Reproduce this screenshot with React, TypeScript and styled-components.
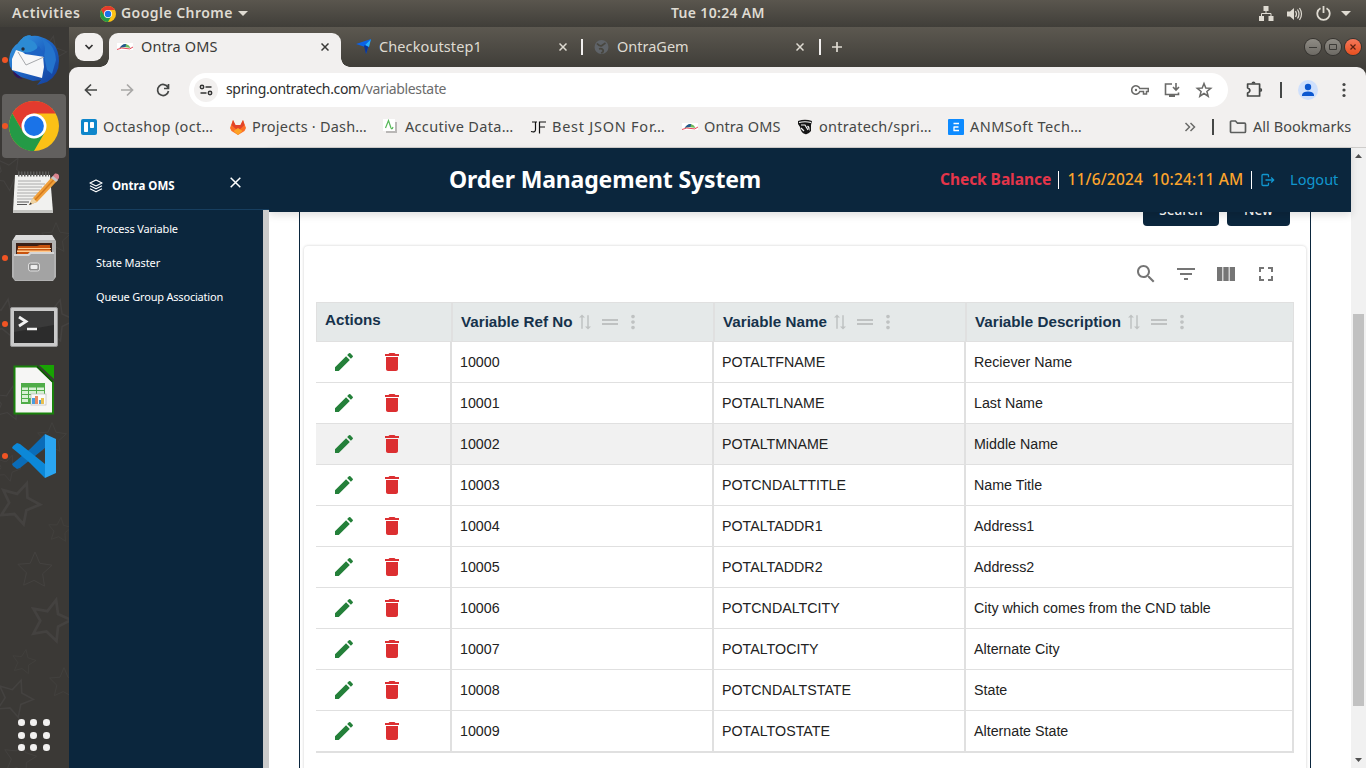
import React from 'react';
import styled, { createGlobalStyle } from 'styled-components';

const NAVY = '#0b263d';
const UI = `'Noto Sans', 'Open Sans', sans-serif`;

const Global = createGlobalStyle`
  * { box-sizing: border-box; }
  html, body { margin: 0; padding: 0; overflow: hidden; }
  body { font-family: ${UI}; }
  svg { display: block; flex: none; }
`;

const Desktop = styled.div`
  width: 1366px;
  height: 768px;
  display: flex;
  flex-direction: column;
  overflow: hidden;
  background: #3b3936;
`;

/* Text run with its own metrics */
const Label = styled.span<{ $size?: number; $ls?: number; $w?: number; $weight?: number; $color?: string }>`
  display: block;
  flex: none;
  white-space: pre;
  padding-bottom: 2px;
  font-size: ${p => p.$size ?? 14.5}px;
  letter-spacing: ${p => p.$ls ?? 0}px;
  font-weight: ${p => p.$weight ?? 400};
  ${p => (p.$w ? `width: ${p.$w}px;` : '')}
  ${p => (p.$color ? `color: ${p.$color};` : '')}
`;

/* ---------- desktop panel ---------- */
const Panel = styled.header`
  height: 27px;
  flex: none;
  display: flex;
  align-items: center;
  color: #dfdbd2;
  background: linear-gradient(#5a564e, #403e39);
`;
const PanelLeft = styled.div`
  display: flex;
  align-items: center;
  width: 671px;
  padding-left: 12px;
`;
const PanelRight = styled.div`
  display: flex;
  flex: 1;
  align-items: center;
  justify-content: flex-end;
  padding-right: 15px;
`;
const ChromeSlot = styled.div`
  margin: 0 5px 0 0;
`;
const Caret = styled.i<{ $ml: number }>`
  margin-left: ${p => p.$ml}px;
  border: 5px solid transparent;
  border-top-color: #dfdbd2;
  border-bottom: 0;
`;

const Workspace = styled.div`
  flex: 1;
  min-height: 0;
  display: flex;
`;

/* ---------- dock ---------- */
const Dock = styled.nav`
  width: 69px;
  flex: none;
  display: flex;
  flex-direction: column;
  position: relative;
  background: #3b3936;
`;
const Stars = styled.svg`
  position: absolute;
  inset: 0;
`;
const DockItem = styled.div<{ $active?: boolean; $pad?: string }>`
  position: relative;
  height: 64px;
  width: 64px;
  margin: 1px 0 1px 2px;
  padding: ${p => p.$pad ?? '0'};
  border-radius: 4px;
  display: flex;
  align-items: center;
  justify-content: center;
  background: ${p => (p.$active ? '#62605e' : 'transparent')};
`;
const Running = styled.span`
  position: absolute;
  left: 0;
  top: 29px;
  width: 6px;
  height: 6px;
  border-radius: 50%;
  background: #f05424;
`;
const AppsGrid = styled.div`
  position: relative;
  margin: auto 0 17px 18px;
  display: grid;
  grid-template-columns: repeat(3, 6.6px);
  gap: 5.9px;
`;
const AppsDot = styled.i`
  height: 6.6px;
  border-radius: 50%;
  background: #f2f1f0;
`;

/* ---------- browser ---------- */
const Browser = styled.section`
  flex: 1;
  min-width: 0;
  display: flex;
  flex-direction: column;
  background: #403e39;
`;
const TabStrip = styled.div`
  height: 40px;
  flex: none;
  display: flex;
  align-items: center;
  padding-left: 6px;
  color: #dfdbd2;
  background: linear-gradient(#5c5850, #403e39);
`;
const TabSearch = styled.div`
  width: 28px;
  height: 28px;
  border-radius: 9px;
  background: #f2f0ef;
  display: flex;
  align-items: center;
  justify-content: center;
`;
const ActiveTab = styled.div`
  position: relative;
  width: 232px;
  height: 34px;
  margin: 6px 0 0 6px;
  padding: 0 12px 6px 8px;
  display: flex;
  align-items: center;
  gap: 8px;
  border-radius: 9px 9px 0 0;
  background: #f2f0ef;
  color: #3a3a38;
  &::before, &::after {
    content: '';
    position: absolute;
    bottom: 0;
    width: 9px;
    height: 9px;
  }
  &::before { left: -9px; background: radial-gradient(circle at 0 0, transparent 8.5px, #f2f0ef 9px); }
  &::after { right: -9px; background: radial-gradient(circle at 100% 0, transparent 8.5px, #f2f0ef 9px); }
`;
const Tab = styled.div<{ $w: number; $pl: number }>`
  width: ${p => p.$w}px;
  padding: 0 15px 0 ${p => p.$pl}px;
  display: flex;
  align-items: center;
  gap: 7px;
`;
const Push = styled.span`
  flex: 1;
`;
const Separator = styled.span<{ $color: string; $h?: number; $w?: number; $m?: string }>`
  flex: none;
  width: ${p => p.$w ?? 2}px;
  height: ${p => p.$h ?? 16}px;
  margin: ${p => p.$m ?? '0'};
  background: ${p => p.$color};
`;
const WindowButtons = styled.div`
  display: flex;
  gap: 4px;
  margin: 0 5px 0 auto;
`;
const WindowButton = styled.span<{ $close?: boolean }>`
  width: 16px;
  height: 16px;
  border-radius: 50%;
  display: flex;
  align-items: center;
  justify-content: center;
  background: ${p => (p.$close ? 'linear-gradient(#f4775a, #e9501f)' : 'linear-gradient(#8f8c85, #6d6a64)')};
  box-shadow: 0 0 0 1px #35332f;
`;
const Toolbar = styled.div`
  height: 45px;
  flex: none;
  display: flex;
  align-items: center;
  padding: 0 13px 0 13px;
  border-radius: 9px 9px 0 0;
  background: #f2f0ef;
  color: #454746;
`;
const NavIcons = styled.div`
  display: flex;
  gap: 18px;
  width: 107px;
`;
const Omnibox = styled.div`
  width: 1039px;
  height: 34px;
  border-radius: 17px;
  padding: 0 15px 0 5px;
  display: flex;
  align-items: center;
  background: #fff;
  color: #2e2e2e;
`;
const SiteInfo = styled.span`
  width: 24px;
  height: 24px;
  margin-right: 8px;
  border-radius: 50%;
  background: #f2f0ef;
  display: flex;
  align-items: center;
  justify-content: center;
`;
const UrlPath = styled.span`
  color: #6c6c6c;
`;
const OmniIcons = styled.div`
  display: flex;
  gap: 14px;
  margin-left: auto;
  color: #6a6a68;
`;
const ToolIcons = styled.div`
  display: flex;
  align-items: center;
  flex: 1;
  padding-left: 16px;
`;
const Avatar = styled.span`
  width: 20px;
  height: 20px;
  border-radius: 50%;
  background: #cfe0fc;
  display: flex;
  align-items: center;
  justify-content: center;
`;
const Bookmarks = styled.div`
  height: 36px;
  flex: none;
  display: flex;
  align-items: center;
  padding: 0 14px 6px 12px;
  background: #f2f0ef;
  border-bottom: 1px solid #cfcdcb;
  color: #454746;
`;
const Bookmark = styled.div<{ $w: number }>`
  width: ${p => p.$w}px;
  display: flex;
  align-items: center;
  gap: 6px;
`;

/* ---------- page ---------- */
const Viewport = styled.div`
  flex: 1;
  min-height: 0;
  display: flex;
  background: #fff;
`;
const Sidebar = styled.aside`
  width: 200px;
  flex: none;
  display: flex;
  flex-direction: column;
  background: ${NAVY};
  color: #fff;
  position: relative;
  z-index: 2;
`;
const SideHead = styled.div`
  height: 62px;
  display: flex;
  align-items: center;
  gap: 9px;
  padding: 15px 28px 0 20px;
  border-bottom: 1px solid #173e5f;
`;
const SideClose = styled.span`
  margin: -8px 0 0 auto;
`;
const SideMenu = styled.div`
  flex: 1;
  border-right: 6px solid #cbcbcb;
  padding: 2px 0 0 27px;
`;
const SideLink = styled.div`
  height: 34px;
  display: flex;
  align-items: center;
`;
const Main = styled.main`
  width: 1082px;
  display: flex;
  flex-direction: column;
`;
const PageHeader = styled.div`
  position: relative;
  z-index: 1;
  height: 64px;
  flex: none;
  display: flex;
  align-items: center;
  padding-left: 180px;
  background: ${NAVY};
  box-shadow: 0 3px 8px rgba(0, 0, 0, 0.13);
`;
const Title = styled.h1`
  margin: 0;
  padding-bottom: 2px;
  width: 491px;
  color: #fff;
  font: 700 23px ${UI};
  letter-spacing: -0.15px;
  white-space: nowrap;
`;
const Scroller = styled.div`
  flex: 1;
  min-height: 0;
  overflow: hidden;
`;
const Frame = styled.div`
  margin: 0 40px 0 30px;
  height: 800px;
  padding: 0 4px;
  border: solid ${NAVY};
  border-width: 0 1px;
  display: flow-root;
`;
const Buttons = styled.div`
  display: flex;
  justify-content: flex-end;
  gap: 8px;
  margin: -22px 16px 20px 0;
`;
const NavyButton = styled.button<{ $w: number }>`
  width: ${p => p.$w}px;
  height: 36px;
  padding: 3px 0 0;
  border: 0;
  border-radius: 4px;
  background: ${NAVY};
  color: #fff;
  font: 500 13.5px ${UI};
`;
const Paper = styled.div`
  height: 700px;
  border-radius: 4px;
  background: #fff;
  padding: 0 12px;
  box-shadow: 0 0 3px rgba(0, 0, 0, 0.2);
`;
const TableTools = styled.div`
  height: 56px;
  display: flex;
  align-items: center;
  justify-content: flex-end;
  gap: 16px;
  padding-right: 16px;
  color: #757575;
`;
const Table = styled.div`
  width: 978px;
  border-bottom: 1px solid #e0e0e0;
  font-family: 'Liberation Sans', Arial, sans-serif;
`;
const HeadRow = styled.div`
  display: grid;
  grid-template-columns: 136px 262px 252px 326px;
  height: 40px;
  border: 1px solid #e0e0e0;
  background: #e5e9e9;
  color: #16324b;
  font-size: 15.2px;
  font-weight: 700;
`;
const HeadCell = styled.div<{ $first?: boolean }>`
  display: flex;
  align-items: center;
  padding: 0 0 ${p => (p.$first ? 6 : 2)}px 8px;
  border-right: 2px solid #e0e0e0;
  &:last-child { border-right: 0; }
`;
const HeadIcons = styled.span`
  display: flex;
  align-items: center;
  margin: 1px 0 0 4px;
  color: #bfc2c2;
`;
const SortSlot = styled.span`
  margin-right: 4px;
`;
const Row = styled.div<{ $hover?: boolean }>`
  display: grid;
  grid-template-columns: 136px 262px 252px 328px;
  height: 41px;
  border-bottom: 1px solid #e0e0e0;
  background: ${p => (p.$hover ? '#f1f1f1' : '#fff')};
  color: #222;
  font-size: 14.25px;
`;
const Cell = styled.div`
  display: flex;
  align-items: center;
  padding-left: 8px;
  border-right: 2px solid #e0e0e0;
  white-space: nowrap;
`;
const ActionCell = styled(Cell)`
  gap: 24px;
  padding-left: 16px;
`;
const Action = styled.span<{ $color: string }>`
  color: ${p => p.$color};
`;

/* ---------- scrollbar ---------- */
const ScrollTrack = styled.div`
  width: 15px;
  display: flex;
  flex-direction: column;
  align-items: center;
  justify-content: space-between;
  padding: 6px 0 6px;
  background: #f1f1f1;
`;
const ScrollThumb = styled.div`
  width: 11px;
  height: 392px;
  margin: 156px 0 auto;
  background: #c1c1c1;
`;

/* ---------- icons ---------- */
const ChromeLogo = ({ size }: { size: number }) => (
  <svg width={size} height={size} viewBox="0 0 50 50">
    <circle cx="25" cy="25" r="25" fill="#fbc116" />
    <path d="M25 12.5H46.65A25 25 0 0 0 3.35 12.5L14.2 31.25L20 14Z" fill="#e33b2e" />
    <path d="M3.35 12.5A25 25 0 0 0 25 50L35.8 31.25L25 36L14.2 31.25Z" fill="#249a46" />
    <circle cx="25" cy="25" r="12.5" fill="#fff" />
    <circle cx="25" cy="25" r="9.9" fill="#1a73e8" />
  </svg>
);
const OntraLogo = () => (
  <svg width="16" height="16" viewBox="0 0 16 16">
    <rect y="4" width="16" height="7" fill="#fff" />
    <path d="M3 9Q6 4.500 9 5Q12.500 6 13.500 9Q8 7.500 3 9Z" fill="#6cb85a" />
    <path d="M2.500 9Q5.500 4.500 9 5L8.500 8Q5 7.800 2.500 9Z" fill="#23598f" />
    <path d="M0 10.500Q5 8 9 9.500T16 8" fill="none" stroke="#e8485a" strokeWidth="1" />
  </svg>
);
const Cross = ({ size = 8, w = 1.5 }: { size?: number; w?: number }) => (
  <svg width={size} height={size} viewBox="0 0 8 8">
    <path d="M.5 .5L7.500 7.500M7.500 .5L.5 7.500" stroke="currentColor" strokeWidth={w} />
  </svg>
);
const MuiIcon = ({ d, size = 24, rotate = 0 }: { d: string; size?: number; rotate?: number }) => (
  <svg width={size} height={size} viewBox="0 0 24 24" fill="currentColor">
    <path d={d} transform={rotate ? `rotate(${rotate} 12 12)` : undefined} />
  </svg>
);
const EDIT = 'M3 17.25V21h3.750L17.810 9.940l-3.750-3.750L3 17.250zM20.710 7.040c.39-.39.39-1.020 0-1.410l-2.340-2.340a.9959.9959 0 0 0-1.410 0l-1.830 1.830 3.750 3.750 1.830-1.830z';
const DELETE = 'M6 19c0 1.100.9 2 2 2h8c1.100 0 2-.9 2-2V7H6v12zM19 4h-3.500l-1-1h-5l-1 1H5v2h14V4z';
const SEARCH = 'M15.500 14h-.79l-.28-.27C15.410 12.590 16 11.110 16 9.500 16 5.910 13.090 3 9.500 3S3 5.910 3 9.500 5.910 16 9.500 16c1.610 0 3.090-.59 4.230-1.570l.27.28v.79l5 4.990L20.490 19l-4.990-5zm-6 0C7.010 14 5 11.990 5 9.500S7.010 5 9.500 5 14 7.010 14 9.500 11.990 14 9.500 14z';
const FILTER = 'M10 18h4v-2h-4v2zM3 6v2h18V6H3zm3 7h12v-2H6v2z';
const COLUMNS = 'M14.670 5v14H9.330V5h5.340zm1 14H21V5h-5.330v14zm-7.340 0V5H3v14h5.330z';
const FULL = 'M7 14H5v5h5v-2H7v-3zm-2-4h2V7h3V5H5v5zm12 7h-3v2h5v-5h-2v3zM14 5v2h3v3h2V5h-5z';
const SYNC = 'M22 8l-4-4v3H3v2h15v3l4-4zM2 16l4 4v-3h15v-2H6v-3l-4 4z';
const DRAG = 'M20 9H4v2h16V9zM4 15h16v-2H4v2z';
const MORE = 'M12 8c1.100 0 2-.9 2-2s-.9-2-2-2-2 .9-2 2 .9 2 2 2zm0 2c-1.100 0-2 .9-2 2s.9 2 2 2 2-.9 2-2-.9-2-2-2zm0 6c-1.100 0-2 .9-2 2s.9 2 2 2 2-.9 2-2-.9-2-2-2z';

const Thunderbird = () => (
  <svg width="50" height="52" viewBox="0 0 50 52">
    <defs>
      <linearGradient id="tb" x1="0" y1="0" x2="1" y2="1">
        <stop offset="0" stopColor="#3aa0e4" /><stop offset=".5" stopColor="#1d63c4" /><stop offset="1" stopColor="#123a96" />
      </linearGradient>
    </defs>
    <path d="M11 8Q15 0 22 2Q28 1 32 3Q50 8 50 27Q50 41 38 48L28 51L32 46L24 47L12 43Q0 38 0 26Q1 13 11 8Z" fill="url(#tb)" />
    <path d="M9 9Q15 1 22 1L19 5Q30 8 28 18L14 20L7 26Q6 16 9 9Z" fill="#2c8bd4" />
    <path d="M32 4Q46 10 47 26L43 40L38 36L35 22Q38 12 32 4Z" fill="#2474cc" />
    <path d="M4 37L14 45L9 44Q4 41 4 37Z" fill="#30155c" />
    <path d="M7 16L16 19L34 22L35 33L33 44L3 36L3 25Z" fill="#f7f7f8" />
    <path d="M9 18L17 31L35 23" fill="none" stroke="#a6a8ac" strokeWidth="1" />
    <path d="M14 18Q24 20 30 12L36 23L16 20Z" fill="#1d63c4" />
    <circle cx="14" cy="15" r="1.700" fill="#222b3a" />
  </svg>
);
const TextEditor = () => (
  <svg width="48" height="44" viewBox="0 0 48 44">
    <path d="M4 5H39L42 42H2Z" fill="#f1f1ef" />
    <path d="M2 40H42V43H2Z" fill="#c3c3c0" />
    <path d="M7 4H38" stroke="#5c5c5a" strokeWidth="5" strokeDasharray="1.500 1.500" />
    <path d="M7 11H30M7 14H34M6.500 17H31M6.500 20H29M6 23H30M6 26H24M6 29H23" stroke="#aaa" strokeWidth="1" />
    <path d="M6 32H18M6 34.500H16" stroke="#555" strokeWidth="1.200" />
    <path d="M22 28L41 7L46 11L26 32L18 35Z" fill="#f0a03c" />
    <path d="M24 30L43.500 9" stroke="#d37a1d" strokeWidth="1.500" />
    <path d="M22 28L26 32L18 35Z" fill="#edd3a4" /><path d="M18 35L19.500 32.500L21 34Z" fill="#333" />
    <path d="M41 7L44 3.500Q49 3 48 8L46 11Z" fill="#d9838d" /><path d="M40 8L42 6L47 10L45 12Z" fill="#c7c7c7" />
  </svg>
);
const Files = () => (
  <svg width="44" height="48" viewBox="0 0 44 48">
    <path d="M4 1H40L44 7V43L41 47H3L0 43V7Z" fill="#b2b2b2" />
    <path d="M4 1H40L43 6H1Z" fill="#dcdcdc" />
    <path d="M4 9H40V21H4Z" fill="#3c2017" />
    <path d="M6 12H25L28 11H38V20H5Z" fill="#c9540f" /><path d="M6 14H39V15H6ZM5 16.500H39V18H5Z" fill="#ffc98c" />
    <path d="M2 20H16L18 18H42V46H2Z" fill="#a3a3a3" /><path d="M2 20H16L18 18H42V20H19L17 22H2Z" fill="#d6d6d6" />
    <rect x="16.500" y="29" width="11" height="8" rx="2" fill="#8e8e8e" stroke="#dedede" />
    <rect x="18.500" y="31" width="7" height="4" rx="1" fill="#eee" />
  </svg>
);
const Terminal = () => (
  <svg width="48" height="40" viewBox="0 0 48 40">
    <rect x=".5" y=".5" width="47" height="39" rx="1.500" fill="#cacaca" stroke="#969696" />
    <rect x="4" y="4" width="40" height="32" fill="#2c2c2c" /><path d="M4 4H44V18L4 25Z" fill="#3a3a3a" />
    <path d="M9 10L16 14.500L9 19" fill="none" stroke="#f2f2f2" strokeWidth="2.800" /><path d="M17 22H27" stroke="#f2f2f2" strokeWidth="2.500" />
  </svg>
);
const Calc = () => (
  <svg width="42" height="50" viewBox="0 0 42 50">
    <path d="M1.500 1.500H24L40 17V48.500H1.500Z" fill="#f6f6f5" stroke="#19810b" strokeWidth="2" />
    <path d="M26 0H41V14Z" fill="#18a303" /><path d="M24 1.500L40 17" stroke="#0e5405" strokeWidth="1.500" />
    <rect x="8" y="18" width="24" height="21" fill="#4fac48" />
    <path d="M9 22.500H15V25H9ZM16 22.500H23V25H16ZM24 22.500H31V25H24ZM9 26H15V29H9ZM16 26H23V29H16ZM24 26H31V29H24ZM9 30H15V33H9ZM16 30H23V33H16ZM9 34H15V37H9Z" fill="#d8f0d5" />
    <rect x="18" y="29" width="15" height="11" fill="#fafafa" stroke="#bbb" strokeWidth=".7" />
    <path d="M19 33H22V39H19ZM26 35H28V39H26Z" fill="#4a9de0" /><path d="M22 31H25V39H22Z" fill="#e98a60" /><path d="M28 33H31V39H28Z" fill="#e8c04f" />
  </svg>
);
const VsCode = () => (
  <svg width="44" height="44" viewBox="0 0 44 44">
    <path d="M33 0L18 15L5 26L0 30L1 32L5 35L8 34L33 14Z" fill="#0a6cb8" />
    <path d="M33 44L18 29L5 18L0 14L1 12L5 9L8 10L33 30Z" fill="#0c88d8" />
    <path d="M33 0L44 5V39L33 44Z" fill="#2aa5f1" />
  </svg>
);
const Layers = () => (
  <svg width="14" height="14" viewBox="0 0 14 14" fill="none" stroke="#fff" strokeWidth="1.200" strokeLinejoin="round">
    <path d="M7 1L13 4L7 7L1 4ZM1 6.800L7 9.800L13 6.800M1 9.700L7 12.800L13 9.700" />
  </svg>
);
const Exit = () => (
  <svg width="14" height="14" viewBox="0 0 14 14" fill="none" stroke="#1196cf" strokeWidth="1.300" strokeLinejoin="round">
    <path d="M7.500 4.300V2.500Q7.500 1.500 6.500 1.500H2Q1 1.500 1 2.500V11.500Q1 12.500 2 12.500H6.500Q7.500 12.500 7.500 11.500V9.700M4.500 7H12.700M10.200 4.500L12.700 7L10.200 9.500" />
  </svg>
);

const star = 'M0 -18L5 -6L18 -4L8 5L10 18L-1 12L-12 17L-9 4L-18 -5L-5 -6Z';
const starSpots: [number, number, number, number, number][] = [
  [20, 475, 1.1, 20, 2.5], [60, 502, 0.65, 5, 1], [35, 542, 0.95, 0, 1], [51, 592, 1.1, 15, 2.5],
  [24, 634, 0.65, 10, 1], [64, 655, 0.8, 0, 1], [15, 670, 1, 20, 1.6], [20, 730, 0.9, 10, 1],
  [50, 25, 0.9, 12, 1.2], [10, 145, 0.9, 30, 1.2], [56, 210, 0.8, 0, 1], [5, 290, 1, 10, 1.5],
  [55, 292, 1.1, 15, 1.4], [10, 375, 0.9, 10, 1.2], [52, 410, 0.8, 0, 1], [8, 440, 0.7, 20, 1],
];

const headers = ['Variable Ref No', 'Variable Name', 'Variable Description'];
const rows: [string, string, string][] = [
  ['10000', 'POTALTFNAME', 'Reciever Name'],
  ['10001', 'POTALTLNAME', 'Last Name'],
  ['10002', 'POTALTMNAME', 'Middle Name'],
  ['10003', 'POTCNDALTTITLE', 'Name Title'],
  ['10004', 'POTALTADDR1', 'Address1'],
  ['10005', 'POTALTADDR2', 'Address2'],
  ['10006', 'POTCNDALTCITY', 'City which comes from the CND table'],
  ['10007', 'POTALTOCITY', 'Alternate City'],
  ['10008', 'POTCNDALTSTATE', 'State'],
  ['10009', 'POTALTOSTATE', 'Alternate State'],
];

const dock: { icon: React.ReactNode; running?: boolean; active?: boolean; pad?: string }[] = [
  { icon: <Thunderbird />, running: true },
  { icon: <ChromeLogo size={50} />, running: true, active: true },
  { icon: <TextEditor />, pad: '0 0 0 2px' },
  { icon: <Files />, running: true },
  { icon: <Terminal />, running: true, pad: '5px 0 0' },
  { icon: <Calc /> },
  { icon: <VsCode />, running: true },
];

const bookmarks: { w: number; text: string; ls: number; icon: React.ReactNode }[] = [
  { w: 149, text: 'Octashop (oct…', ls: 0.32, icon: (
    <svg width="16" height="16" viewBox="0 0 16 16"><rect width="16" height="16" rx="2" fill="#0e86cb" /><rect x="3" y="3" width="4" height="10" rx=".7" fill="#fff" /><rect x="9" y="3" width="4" height="6" rx=".7" fill="#fff" /></svg>) },
  { w: 153, text: 'Projects · Dash…', ls: 0.2, icon: (
    <svg width="16" height="16" viewBox="0 0 16 16"><path d="M3 1L5.500 6H10.500L13 1L16 9L14.500 12L8 16L1.500 12L0 9Z" fill="#fc6d26" /><path d="M3 1L5.500 6H10.500L13 1L14.500 6L8 12L1.500 6Z" fill="#e24329" /><path d="M8 16L3.500 12L8 9L12.500 12Z" fill="#fca326" /></svg>) },
  { w: 147, text: 'Accutive Data…', ls: 0.32, icon: (
    <svg width="16" height="16" viewBox="0 0 16 16"><path d="M3 3H14V14H3Z" fill="#b9b7b6" /><path d="M0 0H12V12H0Z" fill="#fff" /><path d="M2.500 9L5.500 1.500L8 9Q9 11 10 8" fill="none" stroke="#56b858" strokeWidth="1.200" /></svg>) },
  { w: 152, text: 'Best JSON For…', ls: 0.75, icon: (
    <svg width="16" height="16" viewBox="0 0 16 16"><path d="M2 3H7M5.500 3V10.500Q5.500 14 1 12.500M9.500 14.500V3H16M9.500 8H15" fill="none" stroke="#111" strokeWidth="1.200" /></svg>) },
  { w: 115, text: 'Ontra OMS', ls: 0.1, icon: <OntraLogo /> },
  { w: 151, text: 'ontratech/spri…', ls: 0.27, icon: (
    <svg width="16" height="16" viewBox="0 0 16 16"><path d="M1 2Q8 -.5 15 2L14 6L14 12Q11 16 8 15Q4 14 3 8L1 5Z" fill="#161616" /><path d="M2 3.500Q8 2 14 3.500M4 6L8 6L11 11M4 9L7 12" fill="none" stroke="#f4f4f4" strokeWidth="1.200" /><path d="M10 7Q13 6 12.500 12L11 9Z" fill="#eee" /></svg>) },
  { w: 170, text: 'ANMSoft Tech…', ls: 0.42, icon: (
    <svg width="16" height="16" viewBox="0 0 16 16"><rect width="16" height="16" rx="1" fill="#0e8bff" /><path d="M5.500 4.500H11M5.500 8H10.500M5.500 11.500H11M6 8V12" stroke="#fff" strokeWidth="1.300" /></svg>) },
];

export default function App() {
  return (
    <Desktop>
      <Global />
      <Panel>
        <PanelLeft>
          <Label $size={14} $ls={0.6} $weight={600} $w={88}>Activities</Label>
          <ChromeSlot><ChromeLogo size={16} /></ChromeSlot>
          <Label $size={14} $ls={0.45} $weight={600} $w={111}>Google Chrome</Label>
          <Caret $ml={6} />
        </PanelLeft>
        <Label $size={14} $ls={0.32} $weight={600}>Tue 10:24 AM</Label>
        <PanelRight>
          <svg width="16" height="16" viewBox="0 0 16 16" fill="#dfdbd2"><path d="M5.500 0H10.500V5H5.500ZM1 10H6V15H1ZM10.500 10H15.500V15H10.500Z" /><path d="M8 5V7.500M3.500 10V7.500H13V10" fill="none" stroke="#dfdbd2" /></svg>
          <svg width="42" height="16" viewBox="0 0 42 16"><path d="M13 5.500H16L20 2V14L16 10.500H13Z" fill="#dfdbd2" /><path d="M21.500 5Q23.500 8 21.500 11M23.500 3.500Q26.500 8 23.500 12.500M25.500 2Q29.500 8 25.500 14" fill="none" stroke="#dfdbd2" strokeWidth="1.200" /></svg>
          <svg width="16" height="16" viewBox="0 0 16 16" fill="none" stroke="#dfdbd2" strokeWidth="1.800"><path d="M4.500 2.200A6.200 6.200 0 1 0 10.500 2.200M7.500 0V7" /></svg>
          <Caret $ml={9} />
        </PanelRight>
      </Panel>
      <Workspace>
        <Dock>
          <Stars width="69" height="741" viewBox="0 0 69 741">
            {starSpots.map(([x, y, s, r, w], i) => (
              <path key={i} d={star} fill="none" stroke="#444240" strokeWidth={w} transform={`translate(${x} ${y}) rotate(${r}) scale(${s})`} />
            ))}
          </Stars>
          {dock.map((d, i) => (
            <DockItem key={i} $active={d.active} $pad={d.pad}>
              {d.running && <Running />}
              {d.icon}
            </DockItem>
          ))}
          <AppsGrid>{Array.from({ length: 9 }, (_, i) => <AppsDot key={i} />)}</AppsGrid>
        </Dock>
        <Browser>
          <TabStrip>
            <TabSearch>
              <svg width="10" height="10" viewBox="0 0 10 10"><path d="M1.500 3L5 6.500L8.500 3" fill="none" stroke="#333" strokeWidth="1.700" /></svg>
            </TabSearch>
            <ActiveTab>
              <OntraLogo />
              <Label $ls={0.1}>Ontra OMS</Label>
              <Push />
              <Cross />
            </ActiveTab>
            <Tab $w={241} $pl={15}>
              <svg width="16" height="16" viewBox="0 0 16 16"><path d="M0 5L15 0L10 15L9 8Z" fill="#0b63e8" /><path d="M8 7L15 0L10 15Z" fill="#08349a" /><path d="M9 6L15 0L13 8Z" fill="#27b0ff" /></svg>
              <Label $ls={0.1}>Checkoutstep1</Label>
              <Push />
              <Cross />
            </Tab>
            <Separator $color="#f2f0ef" $m="0 0 0 -1px" />
            <Tab $w={236} $pl={11}>
              <svg width="16" height="16" viewBox="0 0 16 16"><circle cx="7.500" cy="8" r="7" fill="#5f6368" /><path d="M3 4.500Q6 8 8 6.500T11.500 4M5 10Q8 9 9 11T7 14" fill="none" stroke="#48463f" strokeWidth="1.800" /></svg>
              <Label>OntraGem</Label>
              <Push />
              <Cross />
            </Tab>
            <Separator $color="#f2f0ef" $m="0 10px 0 0" />
            <svg width="12" height="12" viewBox="0 0 12 12"><path d="M6 1V11M1 6H11" stroke="#dfdbd2" strokeWidth="1.700" /></svg>
            <WindowButtons>
              <WindowButton><svg width="8" height="8" viewBox="0 0 8 8"><path d="M0 4.500H8" stroke="#3c3b37" /></svg></WindowButton>
              <WindowButton><svg width="8" height="8" viewBox="0 0 8 8"><path d="M.5 1.500H7.500V6.500H.5Z" fill="none" stroke="#3c3b37" /></svg></WindowButton>
              <WindowButton $close><svg width="6" height="6" viewBox="0 0 6 6"><path d="M.5 .5L5.500 5.500M5.500 .5L.5 5.500" stroke="#5a2011" strokeWidth="1.200" /></svg></WindowButton>
            </WindowButtons>
          </TabStrip>
          <Toolbar>
            <NavIcons>
              <svg width="18" height="18" viewBox="0 0 18 18" fill="none" stroke="#454746" strokeWidth="1.700"><path d="M15 9H4M9 3.500L3.500 9L9 14.500" /></svg>
              <svg width="18" height="18" viewBox="0 0 18 18" fill="none" stroke="#a9a8a7" strokeWidth="1.700"><path d="M3 9H14M9 3.500L14.500 9L9 14.500" /></svg>
              <svg width="18" height="18" viewBox="0 0 18 18" fill="none" stroke="#454746" strokeWidth="1.700"><path d="M14 6.500A5.500 5.500 0 1 0 14.500 10M14.500 3V7.500H10" /></svg>
            </NavIcons>
            <Omnibox>
              <SiteInfo>
                <svg width="14" height="12" viewBox="0 0 14 12" fill="none" stroke="#333" strokeWidth="1.500"><circle cx="3" cy="3" r="1.700" /><path d="M6.500 3H12.500M1.500 9H7.500" /><circle cx="11" cy="9" r="1.700" /></svg>
              </SiteInfo>
              <Label $size={14} $ls={-0.34}>spring.ontratech.com<UrlPath>/variablestate</UrlPath></Label>
              <OmniIcons>
                <svg width="18" height="18" viewBox="0 0 18 18" fill="none" stroke="currentColor" strokeWidth="1.500"><path d="M8.800 7.500H17.300V10.500H15.500V13H12.500V10.500H8.800A4.200 4.200 0 1 1 8.800 7.500Z" /><circle cx="5" cy="9" r="1.200" fill="currentColor" stroke="none" /></svg>
                <svg width="18" height="18" viewBox="0 0 18 18" fill="none" stroke="currentColor" strokeWidth="1.600"><path d="M9 3H2.500V13.500H15.500V11.500M13 2V8M10 6L13 9L16 6" /><path d="M6 15H12" strokeWidth="2" /></svg>
                <svg width="18" height="18" viewBox="0 0 18 18" fill="none" stroke="currentColor" strokeWidth="1.500"><path d="M9 2.500L10.800 7L15.700 7.300L11.900 10.400L13.200 15.200L9 12.500L4.800 15.200L6.100 10.400L2.300 7.300L7.200 7Z" /></svg>
              </OmniIcons>
            </Omnibox>
            <ToolIcons>
              <svg width="20" height="20" viewBox="0 0 20 20"><path d="M3.600 4H15.600V16H3.600V13Q6.200 12 5.800 10Q5.400 8.200 3.600 8Z" fill="none" stroke="#454746" strokeWidth="1.700" strokeLinejoin="round" /><path d="M7.500 3.400A2 2 0 0 1 11.500 3.400ZM16.200 8A2 2 0 0 1 16.200 12Z" fill="#454746" /></svg>
              <Separator $color="#454746" $m="0 16px 0 16px" />
              <Avatar><svg width="14" height="14" viewBox="0 0 14 14" fill="#0b57d0"><circle cx="7" cy="4" r="3.200" /><path d="M1 13V11.500Q2 8.500 7 8.500T13 11.500V13Z" /></svg></Avatar>
              <Push />
              <svg width="18" height="16" viewBox="0 0 18 16" fill="#454746"><circle cx="9" cy="2.500" r="1.600" /><circle cx="9" cy="8" r="1.600" /><circle cx="9" cy="13.500" r="1.600" /></svg>
            </ToolIcons>
          </Toolbar>
          <Bookmarks>
            {bookmarks.map(b => (
              <Bookmark key={b.text} $w={b.w}>{b.icon}<Label $ls={b.ls}>{b.text}</Label></Bookmark>
            ))}
            <Push />
            <svg width="12" height="12" viewBox="0 0 12 12" fill="none" stroke="#6a6a68" strokeWidth="1.500"><path d="M1.500 2L5.500 6L1.500 10M6.500 2L10.500 6L6.500 10" /></svg>
            <Separator $color="#454746" $m="0 15px 0 16px" />
            <Bookmark $w={123}>
              <svg width="18" height="16" viewBox="0 0 18 16"><path d="M1.500 3Q1.500 2 2.500 2H6.500L8.500 4.200H15.500Q16.500 4.200 16.500 5.200V12.500Q16.500 13.500 15.500 13.500H2.500Q1.500 13.500 1.500 12.500Z" fill="none" stroke="#5c5e5d" strokeWidth="1.700" /></svg>
              <Label $ls={0.05}>All Bookmarks</Label>
            </Bookmark>
          </Bookmarks>
          <Viewport>
            <Sidebar>
              <SideHead>
                <Layers />
                <Label $size={11.5} $ls={0} $weight={700}>Ontra OMS</Label>
                <SideClose><Cross size={11} w={1.1} /></SideClose>
              </SideHead>
              <SideMenu>
                <SideLink><Label $size={11} $ls={-0.16}>Process Variable</Label></SideLink>
                <SideLink><Label $size={11} $ls={-0.1}>State Master</Label></SideLink>
                <SideLink><Label $size={11} $ls={-0.2}>Queue Group Association</Label></SideLink>
              </SideMenu>
            </Sidebar>
            <Main>
              <PageHeader>
                <Title>Order Management System</Title>
                <Label $size={15.5} $ls={-0.05} $weight={700} $w={118} $color="#e5354a">Check Balance</Label>
                <Separator $color="#fff" $w={1} $h={18} />
                <Label $size={15.5} $ls={0.18} $weight={500} $w={192} $color="#fca42c">{'  11/6/2024  10:24:11 AM'}</Label>
                <Separator $color="#fff" $w={1} $h={18} $m="0 9px 0 0" />
                <Exit />
                <Label $size={14.5} $color="#1196cf">{'    Logout'}</Label>
              </PageHeader>
              <Scroller>
                <Frame>
                  <Buttons>
                    <NavyButton $w={76}>Search</NavyButton>
                    <NavyButton $w={63}>New</NavyButton>
                  </Buttons>
                  <Paper>
                    <TableTools>
                      <MuiIcon d={SEARCH} /><MuiIcon d={FILTER} /><MuiIcon d={COLUMNS} /><MuiIcon d={FULL} />
                    </TableTools>
                    <Table>
                      <HeadRow>
                        <HeadCell $first>Actions</HeadCell>
                        {headers.map(h => (
                          <HeadCell key={h}>
                            {h}
                            <HeadIcons>
                              <SortSlot><MuiIcon d={SYNC} size={18} rotate={-90} /></SortSlot>
                              <MuiIcon d={DRAG} size={24} />
                              <MuiIcon d={MORE} size={22} />
                            </HeadIcons>
                          </HeadCell>
                        ))}
                      </HeadRow>
                      {rows.map(([ref, name, desc], i) => (
                        <Row key={ref} $hover={i === 2}>
                          <ActionCell>
                            <Action $color="#24803a"><MuiIcon d={EDIT} /></Action>
                            <Action $color="#dc2f31"><MuiIcon d={DELETE} /></Action>
                          </ActionCell>
                          <Cell>{ref}</Cell>
                          <Cell>{name}</Cell>
                          <Cell>{desc}</Cell>
                        </Row>
                      ))}
                    </Table>
                  </Paper>
                </Frame>
              </Scroller>
            </Main>
            <ScrollTrack>
              <svg width="7" height="4" viewBox="0 0 7 4"><path d="M0 4L3.500 0L7 4Z" fill="#505050" /></svg>
              <ScrollThumb />
              <svg width="7" height="4" viewBox="0 0 7 4"><path d="M0 0L3.500 4L7 0Z" fill="#505050" /></svg>
            </ScrollTrack>
          </Viewport>
        </Browser>
      </Workspace>
    </Desktop>
  );
}
